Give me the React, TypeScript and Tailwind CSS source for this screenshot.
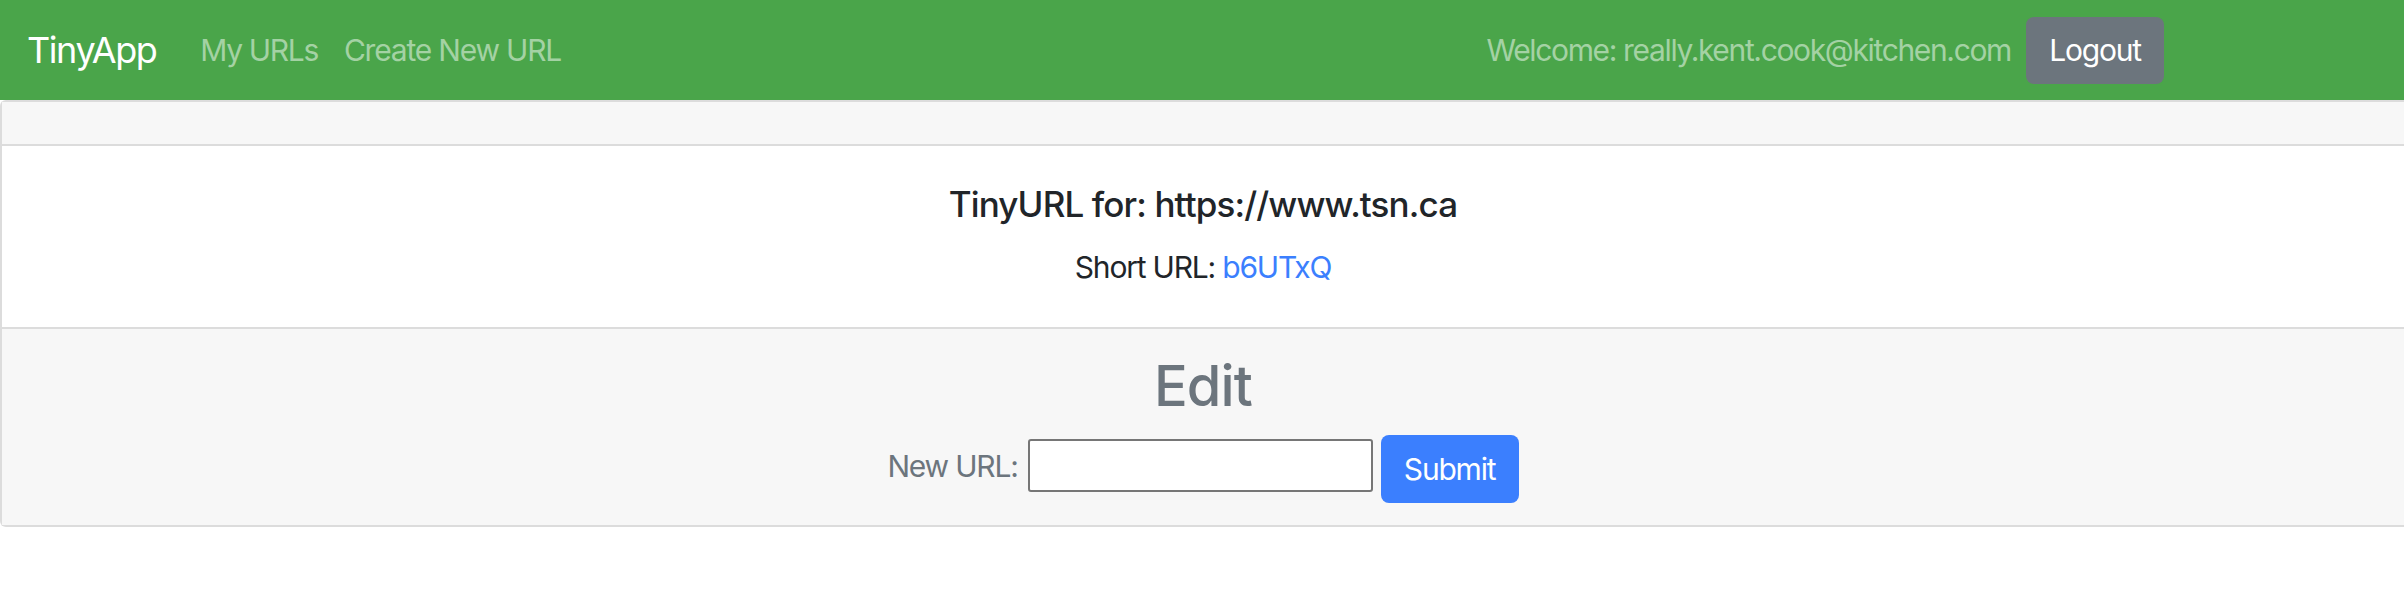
export default function App() {
  return (
    <div className="min-h-[612px] bg-white font-['Inter','Noto_Sans',sans-serif] text-[#212529]">
      {/* Navbar */}
      <nav className="flex h-[100px] items-center bg-[#4aa54a] pl-[27px] pr-[240px]">
        <a href="#" className="mr-[44px] text-[36px] leading-[54px] tracking-[-0.04em] text-white">
          TinyApp
        </a>
        <a href="#" className="mr-[26px] text-[30px] leading-[45px] tracking-[-0.045em] text-[#a4d2a4]">
          My URLs
        </a>
        <a href="#" className="text-[30px] leading-[45px] tracking-[-0.04em] text-[#a4d2a4]">
          Create New URL
        </a>

        <div className="ml-auto flex items-center">
          <span className="mr-[15px] text-[30px] leading-[45px] tracking-[-0.045em] text-[#a4d2a4]">
            Welcome: really.kent.cook@kitchen.com
          </span>
          <button className="flex h-[67px] w-[138px] items-center justify-center rounded-[8px] bg-[#6c757d] text-[30px] leading-[45px] tracking-[-0.04em] text-white">
            Logout
          </button>
        </div>
      </nav>

      {/* Card */}
      <div className="rounded-l-[6px] border-y-2 border-l-2 border-[#dcdcdc]">
        {/* Header */}
        <div className="h-[44px] border-b-2 border-[#dcdcdc] bg-[#f7f7f7]" />

        {/* Body */}
        <div className="flex flex-col items-center pb-[37px] pt-[37px]">
          <h5 className="text-[35px] font-medium leading-[42px] tracking-[-0.025em]">
            TinyURL for: https://www.tsn.ca
          </h5>
          <p className="mt-[20px] text-[30px] leading-[45px] tracking-[-0.04em]">
            Short URL:{" "}
            <a href="#" className="text-[#3b7ffe]">
              b6UTxQ
            </a>
          </p>
        </div>

        {/* Footer */}
        <div className="flex flex-col items-center border-t-2 border-[#dcdcdc] bg-[#f7f7f7] pb-[22px] pt-[24px]">
          <h2 className="text-[56px] font-medium leading-[67px] tracking-[-0.015em] text-[#6c757d]">
            Edit
          </h2>
          <form className="mt-[15px] flex items-start">
            <label className="mt-[9px] text-[30px] leading-[45px] tracking-[-0.04em] text-[#6c757d]">
              New URL:
            </label>
            <input
              type="text"
              className="ml-[10px] mt-[4px] h-[53px] w-[345px] rounded-[3px] border-2 border-[#767676] bg-white"
            />
            <button
              type="button"
              className="ml-[8px] flex h-[68px] w-[138px] items-center justify-center rounded-[8px] bg-[#3b7ffe] text-[30px] leading-[45px] tracking-[-0.04em] text-white"
            >
              Submit
            </button>
          </form>
        </div>
      </div>
    </div>
  );
}
